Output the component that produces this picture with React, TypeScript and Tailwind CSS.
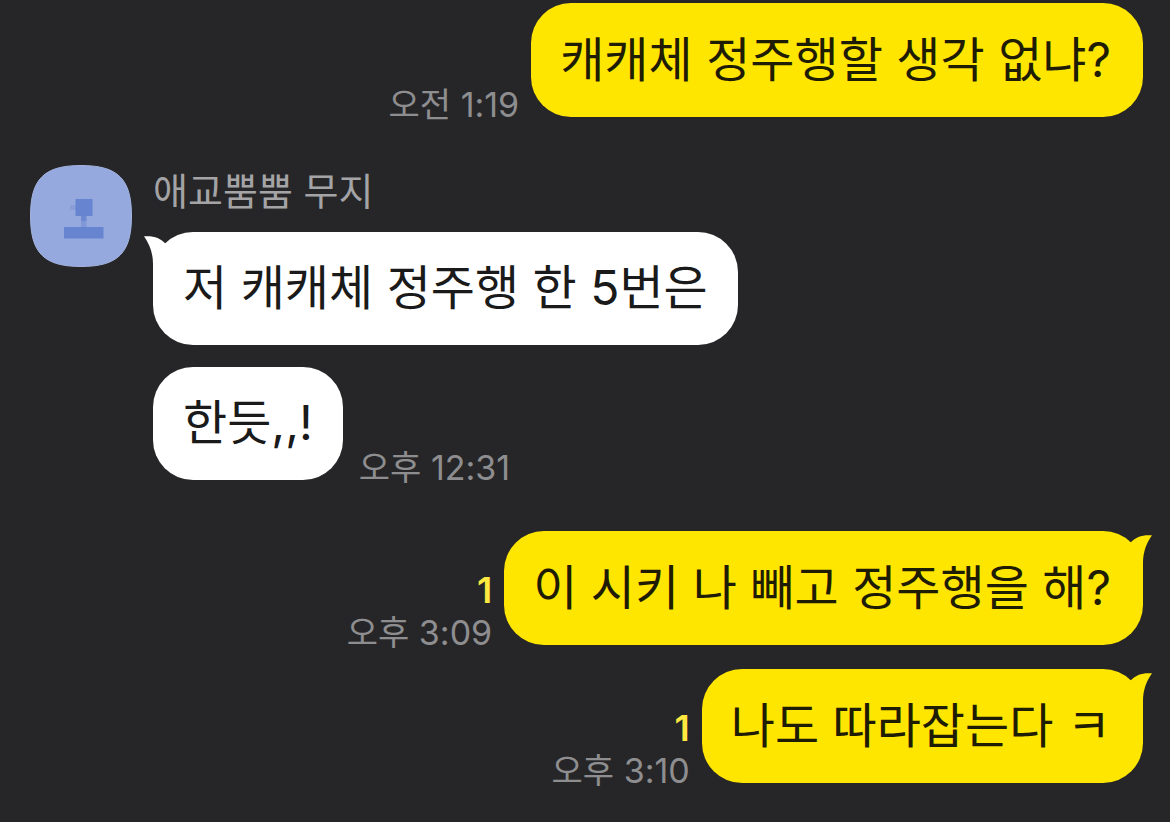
import type { ReactNode } from "react";
import clsx from "clsx";

type Message = {
  text: string;
  time?: string;
  unread?: number;
  tail?: boolean;
};

const morning: Message[] = [{ text: "캐캐체 정주행할 생각 없냐?", time: "오전 1:19" }];

const received: Message[] = [
  { text: "저 캐캐체 정주행 한 5번은", tail: true },
  { text: "한듯,,!", time: "오후 12:31" },
];

const afternoon: Message[] = [
  { text: "이 시키 나 빼고 정주행을 해?", time: "오후 3:09", unread: 1, tail: true },
  { text: "나도 따라잡는다 ㅋ", time: "오후 3:10", unread: 1, tail: true },
];

function Avatar() {
  return (
    <svg viewBox="0 0 102 102" className="size-[102px] shrink-0" role="img" aria-label="애교뿜뿜 무지">
      <path
        d="M51 .5C88 .5 101.500 14 101.500 51S88 101.500 51 101.500.5 88 .5 51 14 .5 51 .5Z"
        fill="#95a9de"
        stroke="#a3b3e0"
      />
      <path d="M40 40h6v5h-6z" fill="#8a9fda" />
      <path d="M45.500 34h17v17h-17zM34 62h39.500v11.500H34z" fill="#6784d0" />
      <path d="M51 51h5.500v5.500H51z" fill="#6c88d1" />
      <path d="M51 56.500h5.500V62H51z" fill="#8198d8" />
    </svg>
  );
}

function Tail({ mine }: { mine: boolean }) {
  return (
    <svg
      viewBox="0 0 22 38"
      aria-hidden="true"
      className={clsx(
        "absolute top-1 h-[38px] w-[22px]",
        mine ? "-right-[9px] text-[#ffe600]" : "-left-[9px] -scale-x-100 text-white"
      )}
    >
      <path d="M0 8C6 1.500 13-.5 22 .3 16.500 8 13 17 13 28V38L0 20Z" fill="currentColor" />
    </svg>
  );
}

function Bubble({ mine, tail, children }: { mine: boolean; tail?: boolean; children: ReactNode }) {
  return (
    <div
      className={clsx(
        "relative rounded-[40px] pb-[30px] text-5xl leading-[54px]",
        mine ? "bg-[#ffe600] pt-[30px] pr-8 pl-[29px] text-[#1f1c04]" : "bg-white px-[30px] pt-[29px] text-[#1a1a1a]"
      )}
    >
      {tail && <Tail mine={mine} />}
      <p>{children}</p>
    </div>
  );
}

function MessageRow({ message, mine }: { message: Message; mine: boolean }) {
  return (
    <li className={clsx("flex items-end", mine ? "flex-row-reverse gap-3" : "gap-4")}>
      <Bubble mine={mine} tail={message.tail}>
        {message.text}
      </Bubble>
      {message.time && (
        <div className={clsx("-mb-2 flex flex-col", mine && "items-end")}>
          {message.unread && (
            <span className="text-4xl leading-[46px] font-semibold text-[#ffe840]">{message.unread}</span>
          )}
          <time className="text-[34px] leading-[40px] text-[#8e8e90]">{message.time}</time>
        </div>
      )}
    </li>
  );
}

export default function App() {
  return (
    <main
      lang="ko"
      className="min-h-screen bg-[#262628] pt-[3px] pr-[27px] pb-9 pl-[30px] font-['Inter','Noto_Sans_CJK_KR',sans-serif] whitespace-nowrap"
    >
      <ul>
        {morning.map((m) => (
          <MessageRow key={m.text} message={m} mine />
        ))}
      </ul>

      <section className="mt-12 flex items-start gap-[21px]">
        <Avatar />
        <div>
          <h2 className="mb-[15px] text-[38px] leading-[52px] text-[#a4a4a6]">애교뿜뿜 무지</h2>
          <ul className="flex flex-col gap-[22px]">
            {received.map((m) => (
              <MessageRow key={m.text} message={m} mine={false} />
            ))}
          </ul>
        </div>
      </section>

      <ul className="mt-[51px] flex flex-col gap-6">
        {afternoon.map((m) => (
          <MessageRow key={m.text} message={m} mine />
        ))}
      </ul>
    </main>
  );
}
